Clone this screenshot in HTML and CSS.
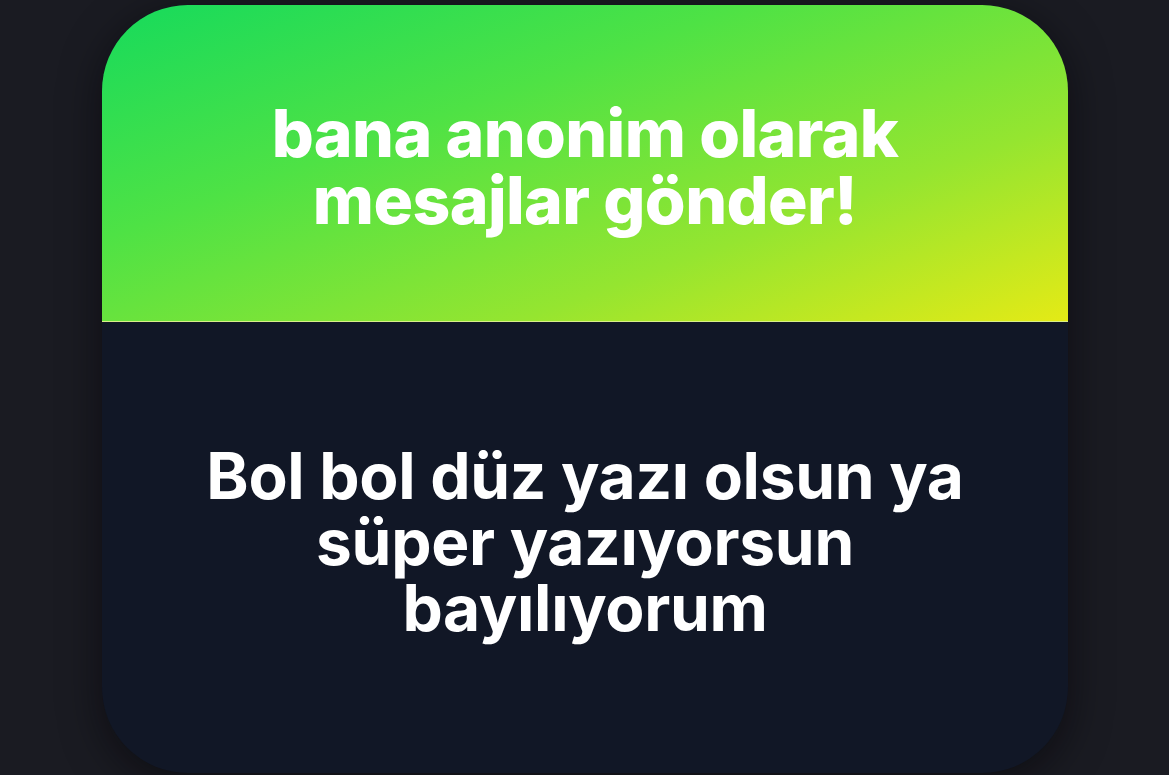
FILE: index.html
```html
<!DOCTYPE html>
<html lang="tr">
<head>
<meta charset="utf-8">
<link rel="stylesheet" href="styles.css">
</head>
<body>
<div class="page">
  <div class="card">
    <div class="card-top">
      <h1 class="title">bana anonim olarak<br>mesajlar gönder!</h1>
    </div>
    <div class="card-bottom">
      <p class="message">Bol bol düz yazı olsun ya<br>süper yazıyorsun<br>bayılıyorum</p>
    </div>
  </div>
</div>
</body>
</html>
```
FILE: styles.css
```css
html, body {
  margin: 0;
  padding: 0;
  height: 100%;
  overflow: hidden;
  background: #1a1b22;
}
.page {
  padding: 5px 101px 0 102px;
  height: 775px;
  box-sizing: border-box;
}
.card {
  height: 768px;
  border-radius: 86px;
  overflow: hidden;
  display: flex;
  flex-direction: column;
  background: #111726;
  box-shadow: 0 10px 40px rgba(5, 3, 8, 0.55);
}
.card-top {
  height: 317px;
  flex: none;
  display: flex;
  align-items: center;
  justify-content: center;
  background: linear-gradient(160deg, #16da5c 0%, #4ee245 35%, #95e530 70%, #e4ea16 100%);
  border-bottom: 1px solid #d9ee8a;
  box-sizing: border-box;
  padding-top: 8px;
}
.title {
  margin: 0;
  font-family: Inter, "Noto Sans", sans-serif;
  font-weight: 800;
  font-size: 66px;
  line-height: 67px;
  letter-spacing: -0.6px;
  color: #ffffff;
  text-align: center;
}
.card-bottom {
  flex: 1;
  display: flex;
  align-items: center;
  justify-content: center;
  padding-bottom: 12px;
}
.message {
  margin: 0;
  font-family: Inter, "Noto Sans", sans-serif;
  font-weight: 650;
  font-size: 64px;
  line-height: 66px;
  letter-spacing: -0.3px;
  color: #ffffff;
  text-align: center;
}
```
